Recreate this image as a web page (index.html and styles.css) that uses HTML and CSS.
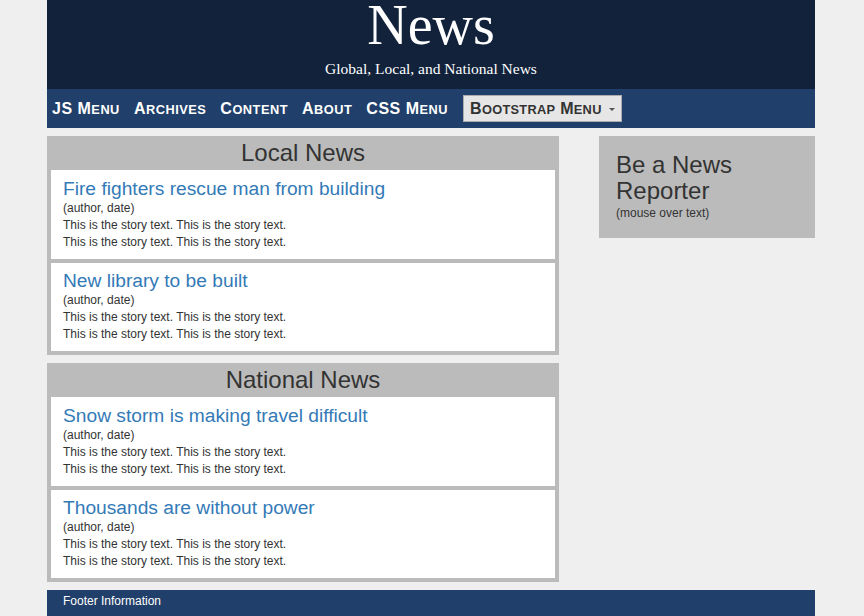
FILE: index.html
```html
<!DOCTYPE html>
<html>
<head>
<meta charset="utf-8">
<title>News</title>
<link rel="stylesheet" href="styles.css">
</head>
<body>
<div class="page">
  <header class="masthead">
    <h1 class="title">News</h1>
    <p class="subtitle">Global, Local, and National News</p>
  </header>
  <nav class="nav">
    <a class="nav-link" href="#">JS M<span class="sc">enu</span></a>
    <a class="nav-link" href="#">A<span class="sc">rchives</span></a>
    <a class="nav-link" href="#">C<span class="sc">ontent</span></a>
    <a class="nav-link" href="#">A<span class="sc">bout</span></a>
    <a class="nav-link" href="#">CSS M<span class="sc">enu</span></a>
    <button class="dropdown"><span>B<span class="sc">ootstrap</span> M<span class="sc">enu</span></span><span class="caret"></span></button>
  </nav>
  <main class="main">
    <div class="col-left">
      <section class="panel">
        <h2 class="panel-title">Local News</h2>
        <article class="story">
          <h3 class="headline"><a href="#">Fire fighters rescue man from building</a></h3>
          <div class="byline">(author, date)</div>
          <p class="text">This is the story text. This is the story text.</p>
          <p class="text">This is the story text. This is the story text.</p>
        </article>
        <article class="story">
          <h3 class="headline"><a href="#">New library to be built</a></h3>
          <div class="byline">(author, date)</div>
          <p class="text">This is the story text. This is the story text.</p>
          <p class="text">This is the story text. This is the story text.</p>
        </article>
      </section>
      <section class="panel">
        <h2 class="panel-title">National News</h2>
        <article class="story">
          <h3 class="headline"><a href="#">Snow storm is making travel difficult</a></h3>
          <div class="byline">(author, date)</div>
          <p class="text">This is the story text. This is the story text.</p>
          <p class="text">This is the story text. This is the story text.</p>
        </article>
        <article class="story">
          <h3 class="headline"><a href="#">Thousands are without power</a></h3>
          <div class="byline">(author, date)</div>
          <p class="text">This is the story text. This is the story text.</p>
          <p class="text">This is the story text. This is the story text.</p>
        </article>
      </section>
    </div>
    <aside class="col-right">
      <div class="reporter">
        <h2 class="reporter-title">Be a News Reporter</h2>
        <div class="byline">(mouse over text)</div>
      </div>
    </aside>
  </main>
  <footer class="footer">Footer Information</footer>
</div>
</body>
</html>
```
FILE: styles.css
```css
html, body {
  margin: 0;
  padding: 0;
}
body {
  background: #efefef;
  font-family: "Liberation Sans", Arial, sans-serif;
  font-size: 12px;
  color: #333;
}
.page {
  width: 768px;
  margin: 0 49px 0 47px;
}
.masthead {
  background: #11223a;
  color: #fff;
  text-align: center;
  padding: 0 0 10px;
}
.title {
  margin: 0;
  font-family: "Liberation Serif", "Times New Roman", serif;
  font-weight: normal;
  font-size: 56px;
  line-height: 50px;
}
.subtitle {
  margin: 9px 0 0;
  font-family: "Liberation Serif", "Times New Roman", serif;
  font-size: 15.5px;
  line-height: 20px;
}
.nav {
  background: #203f6a;
  height: 39px;
  display: flex;
  align-items: center;
  padding-left: 5px;
  gap: 14px;
}
.nav-link {
  color: #fff;
  text-decoration: none;
  font-weight: bold;
  font-size: 16px;
  letter-spacing: 0.5px;
  line-height: 37px;
}
.sc {
  font-size: 12.8px;
  text-transform: uppercase;
}
.dropdown {
  margin-left: 1px;
  height: 27px;
  background: #e6e6e6;
  border: 1px solid #adadad;
  border-radius: 0;
  padding: 0 6px 0 6px;
  font-family: "Liberation Sans", Arial, sans-serif;
  font-weight: bold;
  font-size: 16px;
  letter-spacing: 0.3px;
  color: #333;
  display: flex;
  align-items: center;
  gap: 7px;
}
.caret {
  width: 0;
  height: 0;
  border-top: 3px solid #555;
  border-left: 3px solid transparent;
  border-right: 3px solid transparent;
  margin-top: 2px;
}
.main {
  display: flex;
  justify-content: space-between;
  align-items: flex-start;
  margin-top: 8px;
}
.col-left {
  width: 512px;
  display: flex;
  flex-direction: column;
  gap: 8px;
}
.panel {
  background: #bbb;
  padding: 0 4px 4px;
  display: flex;
  flex-direction: column;
  gap: 4px;
}
.panel-title {
  margin: 0 0 -4px;
  text-align: center;
  font-weight: normal;
  font-size: 24px;
  line-height: 34px;
  color: #333;
}
.story {
  background: #fff;
  padding: 8.5px 12px 8px 12px;
}
.headline {
  margin: 0;
  padding-bottom: 1px;
  font-weight: normal;
  font-size: 19.2px;
  line-height: 20px;
}
.headline a {
  color: #337ab7;
  text-decoration: none;
}
.byline {
  font-size: 12px;
  line-height: 17px;
}
.text {
  margin: 0;
  font-size: 12px;
  line-height: 17px;
}
.col-right {
  width: 216px;
}
.reporter {
  background: #bbb;
  padding: 16px 16px 16px 17px;
}
.reporter-title {
  margin: 0 0 1px;
  font-weight: normal;
  font-size: 24px;
  line-height: 26px;
  color: #333;
}
.footer {
  margin-top: 8px;
  background: #203f6a;
  color: #fff;
  font-size: 12px;
  line-height: 17px;
  padding: 3px 16px 10px;
}
```
